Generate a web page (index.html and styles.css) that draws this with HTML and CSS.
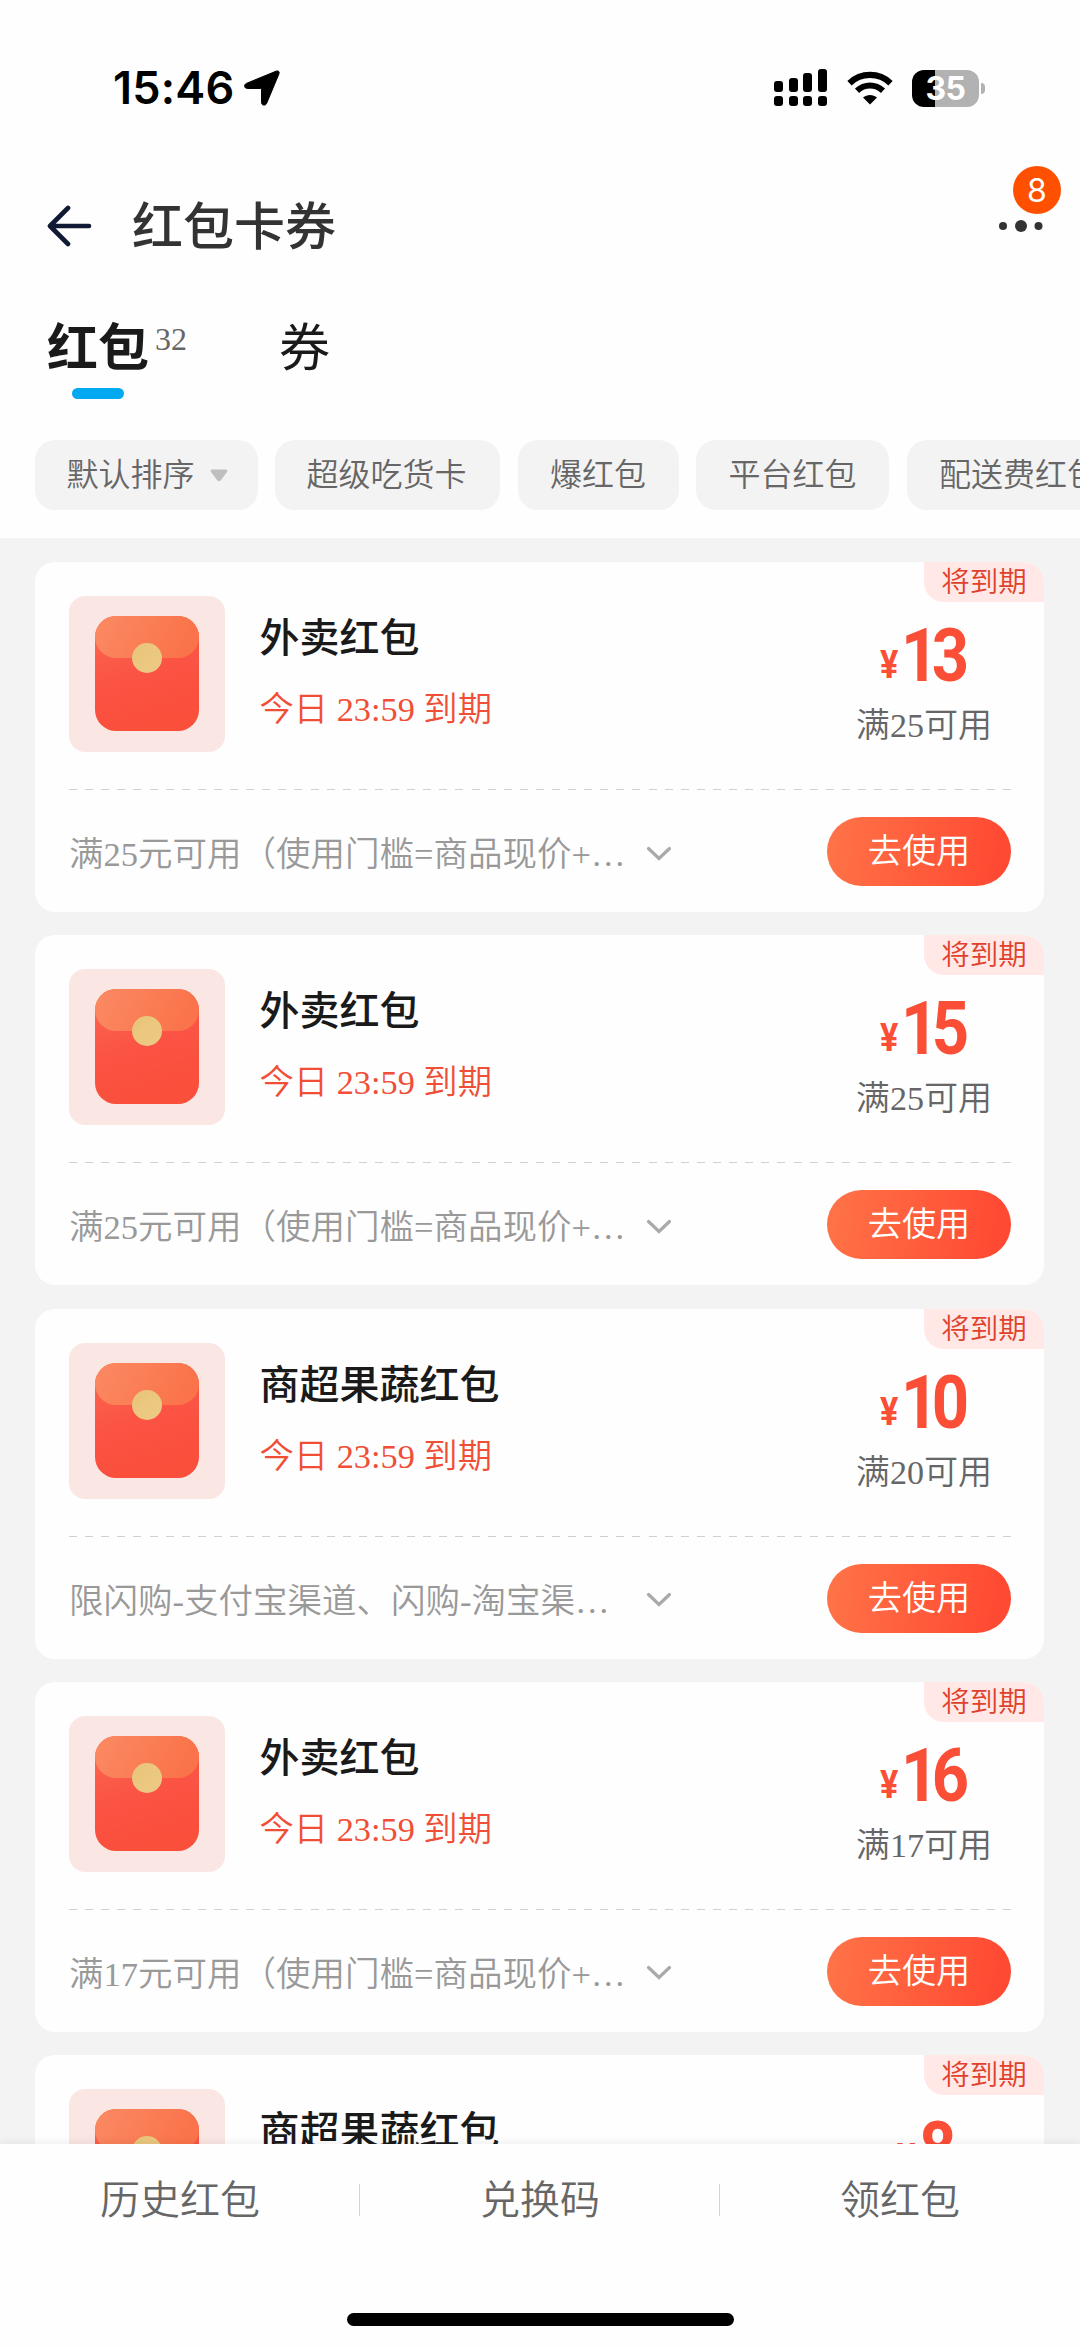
FILE: index.html
```html
<!DOCTYPE html>
<html lang="zh-CN">
<head>
<meta charset="utf-8">
<title>红包卡券</title>
<link rel="stylesheet" href="styles.css">
</head>
<body>
<svg class="defs" width="0" height="0" aria-hidden="true">
  <defs>
    <linearGradient id="env-body" x1="0" y1="0" x2="0.3" y2="1"><stop offset="0" stop-color="#fb6a50"/><stop offset="0.55" stop-color="#fb5445"/><stop offset="1" stop-color="#f94f3b"/></linearGradient>
    <linearGradient id="env-flap" x1="0" y1="0" x2="1" y2="0.2"><stop offset="0" stop-color="#fb8a63"/><stop offset="1" stop-color="#fa734a"/></linearGradient>
    <linearGradient id="env-seal" x1="0" y1="0" x2="1" y2="1"><stop offset="0" stop-color="#e9c47a"/><stop offset="1" stop-color="#edcb85"/></linearGradient>
  </defs>
  <symbol id="envelope" viewBox="0 0 104 116">
    <rect width="104" height="115" rx="21" fill="url(#env-body)"/>
    <path d="M21 0H83A21 21 0 0 1 104 21A21 21 0 0 1 83 42H21A21 21 0 0 1 0 21A21 21 0 0 1 21 0Z" fill="url(#env-flap)"/>
    <circle cx="52" cy="42" r="15" fill="url(#env-seal)"/>
  </symbol>
  <symbol id="chevron" viewBox="0 0 26 16">
    <path d="M2.5 2.5L13 12.5L23.5 2.5" fill="none" stroke="#aaa" stroke-width="3.2" stroke-linecap="round"/>
  </symbol>
</svg>
<div class="screen">
  <div class="status">
    <span class="time">15:46</span>
    <svg class="locate" width="36" height="36" viewBox="0 0 36 36"><path d="M32 1.2C34.4 .2 35.8 1.8 34.9 4L22.6 33.4C21.5 36 17.5 35.6 17.5 32.6V19.6Q17.5 18.5 16.4 18.5H3.4C.2 18.5 -.4 14.6 2.4 13.4Z" fill="#000" stroke="#000"/></svg>
    <svg class="signal" width="54" height="38" viewBox="0 0 54 38">
      <rect x="0" y="12" width="9" height="11" rx="3"/><rect x="15" y="9" width="9" height="14" rx="3"/><rect x="29" y="4" width="9" height="19" rx="3"/><rect x="44" y="0" width="9" height="23" rx="3"/>
      <rect x="0" y="27" width="9" height="10" rx="3"/><rect x="15" y="27" width="9" height="10" rx="3"/><rect x="29" y="27" width="9" height="10" rx="3"/><rect x="44" y="27" width="9" height="10" rx="3"/>
    </svg>
    <svg class="wifi" width="46" height="34" viewBox="0 0 46 34">
      <path d="M2.5 12.2C14 1.2 32 1.2 43.5 12.2" fill="none" stroke="#000" stroke-width="6.2"/>
      <path d="M10 19.8C17.5 12.8 28.5 12.8 36 19.8" fill="none" stroke="#000" stroke-width="6"/>
      <path d="M16 26.6C20 23 26 23 30 26.6L23 33.4Z"/>
    </svg>
    <div class="battery"><span>35</span></div><i class="nub"></i>
  </div>

  <div class="titlebar">
    <svg width="46" height="42" viewBox="0 0 46 42"><path d="M21 3L3 21L21 39M4 21H42" fill="none" stroke="#101a33" stroke-width="4.6" stroke-linecap="round" stroke-linejoin="round"/></svg>
    <h1>红包卡券</h1>
    <div class="more">
      <svg width="44" height="12" viewBox="0 0 44 12" fill="#333"><circle cx="4" cy="6" r="4"/><circle cx="22" cy="6" r="6"/><circle cx="39.5" cy="6" r="4"/></svg>
      <span class="badge">8</span>
    </div>
  </div>

  <div class="tabs">
    <div class="tab active"><b>红包</b></div><span class="count">32</span>
    <div class="tab">券</div>
  </div>

  <div class="filters">
    <div class="pill sort">默认排序<svg width="18" height="13" viewBox="0 0 18 13"><path d="M2 .5H16Q18.2 1 17 3L10.8 11.2Q9 13 7.2 11.2L1 3Q-.2 1 2 .5Z" fill="#bfbfbf"/></svg></div>
    <div class="pill">超级吃货卡</div>
    <div class="pill">爆红包</div>
    <div class="pill">平台红包</div>
    <div class="pill">配送费红包</div>
  </div>

  <div class="list">
    <div class="card">
      <div class="main">
        <div class="thumb"><svg width="104" height="116"><use href="#envelope"/></svg></div>
        <div class="info"><h2>外卖红包</h2><p>今日 23:59 到期</p></div>
        <div class="value"><div class="price"><small>¥</small><strong>13</strong></div><p>满25可用</p></div>
      </div>
      <div class="foot"><p>满25元可用（使用门槛=商品现价+…</p><svg width="26" height="16"><use href="#chevron"/></svg><a class="use">去使用</a></div>
      <span class="tag">将到期</span>
    </div>
    <div class="card">
      <div class="main">
        <div class="thumb"><svg width="104" height="116"><use href="#envelope"/></svg></div>
        <div class="info"><h2>外卖红包</h2><p>今日 23:59 到期</p></div>
        <div class="value"><div class="price"><small>¥</small><strong>15</strong></div><p>满25可用</p></div>
      </div>
      <div class="foot"><p>满25元可用（使用门槛=商品现价+…</p><svg width="26" height="16"><use href="#chevron"/></svg><a class="use">去使用</a></div>
      <span class="tag">将到期</span>
    </div>
    <div class="card">
      <div class="main">
        <div class="thumb"><svg width="104" height="116"><use href="#envelope"/></svg></div>
        <div class="info"><h2>商超果蔬红包</h2><p>今日 23:59 到期</p></div>
        <div class="value"><div class="price"><small>¥</small><strong>10</strong></div><p>满20可用</p></div>
      </div>
      <div class="foot"><p>限闪购-支付宝渠道、闪购-淘宝渠…</p><svg width="26" height="16"><use href="#chevron"/></svg><a class="use">去使用</a></div>
      <span class="tag">将到期</span>
    </div>
    <div class="card">
      <div class="main">
        <div class="thumb"><svg width="104" height="116"><use href="#envelope"/></svg></div>
        <div class="info"><h2>外卖红包</h2><p>今日 23:59 到期</p></div>
        <div class="value"><div class="price"><small>¥</small><strong>16</strong></div><p>满17可用</p></div>
      </div>
      <div class="foot"><p>满17元可用（使用门槛=商品现价+…</p><svg width="26" height="16"><use href="#chevron"/></svg><a class="use">去使用</a></div>
      <span class="tag">将到期</span>
    </div>
    <div class="card">
      <div class="main">
        <div class="thumb"><svg width="104" height="116"><use href="#envelope"/></svg></div>
        <div class="info"><h2>商超果蔬红包</h2></div>
        <div class="value"><div class="price"><small>¥</small><strong>8</strong></div></div>
      </div>
      <span class="tag">将到期</span>
    </div>
  </div>

  <div class="bottom">
    <div class="actions"><a>历史红包</a><a>兑换码</a><a>领红包</a></div>
    <div class="home"></div>
  </div>
</div>
</body>
</html>
```
FILE: styles.css
```css
* { box-sizing: border-box; margin: 0; padding: 0; }
body { width: 1080px; background: #f3f3f3; }
.defs { position: absolute; }
.screen {
  width: 1080px; height: 2348px; overflow: hidden;
  display: flex; flex-direction: column;
  font-family: "Liberation Serif", "Noto Sans CJK SC", sans-serif;
  color: #1a1a1a; background: #f3f3f3;
}
.screen svg { flex: none; display: block; }

.status { height: 176px; flex: none; display: flex; align-items: center; background: #fefefe; padding-left: 113px; }
.time { width: 131px; font: 600 45px/48px Inter, sans-serif; letter-spacing: 0.2px; color: #000; }
.signal { margin-left: 494px; }
.wifi { margin-left: 19px; }
.battery {
  margin-left: 19px; width: 67px; height: 37px; border-radius: 12px;
  background: linear-gradient(90deg, #000 23px, #b2b2b2 23px);
  display: flex; align-items: center; justify-content: center;
  font: 700 32px/37px Inter, sans-serif; color: #fff; letter-spacing: -0.5px;
}
.nub { width: 4px; height: 11px; margin-left: 2px; border-radius: 0 5px 5px 0; background: #b2b2b2; }

.titlebar { height: 100px; flex: none; display: flex; align-items: center; background: #fefefe; padding: 0 37px 0 47px; }
.titlebar h1 { margin-left: 39px; padding-top: 3px; font-size: 51px; line-height: 60px; font-weight: 500; color: #333; }
.more { position: relative; margin-left: auto; }
.badge {
  position: absolute; left: 14px; top: -54px; width: 48px; height: 48px; border-radius: 50%;
  background: #ff5000; color: #fff; text-align: center; font: 400 32px/50px Inter, sans-serif;
}

.tabs { height: 164px; flex: none; display: flex; align-items: flex-start; background: #fefefe; padding: 43px 0 0 47px; }
.tab { font-size: 51px; line-height: 60px; }
.tab b { font-weight: 700; }
.tab.active { display: flex; flex-direction: column; align-items: center; }
.tab.active::after { content: ""; width: 52px; height: 11px; margin-top: 9px; border-radius: 6px; background: #02a9f1; }
.count { width: 124px; margin-left: 6px; padding-top: 2px; font-size: 32px; line-height: 36px; color: #666; }

.filters { height: 98px; flex: none; display: flex; gap: 17.5px; align-items: flex-start; background: #fefefe; padding-left: 35px; }
.pill {
  flex: none; height: 70px; border-radius: 20px; background: #f3f3f3; padding: 0 32.5px;
  display: flex; align-items: center; font-size: 32px; line-height: 46px; color: #666; font-weight: 350;
}
.pill.sort { padding: 0 30px 0 31.5px; }
.pill.sort svg { margin-left: 15px; }
.pill.sort + .pill { padding: 0 33.5px 0 31.5px; }

.list { flex: 1; min-height: 0; overflow: hidden; display: flex; flex-direction: column; gap: 23.3px; padding: 24px 36px 0 35px; font-weight: 350; }
.card { position: relative; flex: none; height: 350px; border-radius: 20px; background: #fefefe; padding: 0 33px 0 34px; overflow: hidden; }
.main { height: 227px; display: flex; align-items: flex-start; padding-top: 34px; }
.thumb { flex: none; width: 156px; height: 156px; border-radius: 16px; background: #fae7e4; display: flex; align-items: center; justify-content: center; }
.info { flex: 1; padding-left: 34.5px; padding-top: 14px; }
.info h2 { font-size: 40px; line-height: 58px; font-weight: 500; color: #1a1a1a; }
.info p { margin-top: 16px; font-size: 34.3px; line-height: 50px; color: #f04e36; white-space: nowrap; }
.value { width: 174px; display: flex; flex-direction: column; align-items: center; }
.price { display: flex; align-items: baseline; justify-content: center; height: 105px; padding-top: 20px; gap: 1px; color: #fa4e37; font-family: Roboto, sans-serif; line-height: 80px; }
.price small { font-size: 38px; line-height: 1; font-weight: 700; transform: translateY(-3px) scaleX(.9); transform-origin: left; }
.price strong { font-size: 74px; font-weight: 700; letter-spacing: -7.5px; margin-right: -3px; transform: scaleX(.88); transform-origin: left; }
.value p { font-size: 34.1px; line-height: 50px; color: #666; white-space: nowrap; }
.foot {
  height: 123px; display: flex; align-items: center; padding-top: 2px;
  background: repeating-linear-gradient(90deg, #d0d0d0 0 8px, transparent 8px 16.1px) 0 0 / 100% 1px no-repeat;
}
.foot p { width: 577px; font-size: 34.5px; line-height: 50px; color: #999; white-space: nowrap; padding-top: 5px; }
.foot svg { margin-top: 4px; }
.foot a {
  width: 184px; height: 69px; margin-left: auto; border-radius: 35px;
  background: linear-gradient(100deg, #ff7448 0%, #ff4a33 90%);
  color: #fff; font-size: 34.2px; line-height: 69px; text-align: center;
}
.tag {
  position: absolute; right: 0; top: 0; width: 120px; height: 40px; border-radius: 0 20px 0 20px;
  background: #ffe8e6; color: #e0412c; font-size: 28.5px; line-height: 42px; text-align: center;
}

.bottom { position: relative; height: 204px; flex: none; background: #fefefe; box-shadow: 0 -1px 10px rgba(0,0,0,.07); display: flex; flex-direction: column; align-items: center; }
.actions { width: 1080px; height: 169px; display: flex; padding-top: 27px; }
.actions a { flex: 1; height: 58px; font-size: 40px; line-height: 60px; color: #666; text-align: center; font-weight: 350; background: linear-gradient(#d4d4d4, #d4d4d4) right 13px / 1px 32px no-repeat; }
.actions a:last-child { background: none; }
.home { width: 387px; height: 13px; border-radius: 7px; background: #000; }
```
